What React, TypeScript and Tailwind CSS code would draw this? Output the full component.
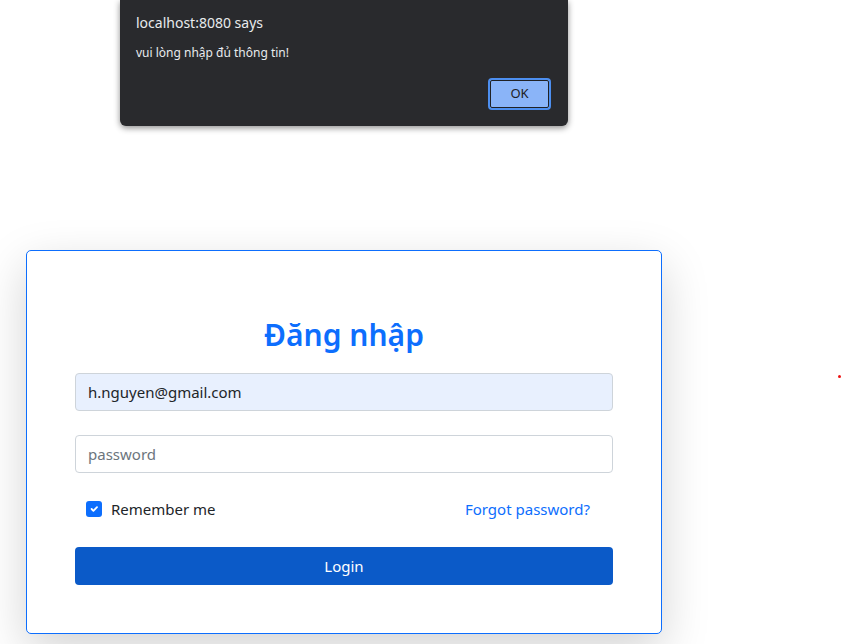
import React from "react";

export default function App() {
  return (
    <div className="relative w-[843px] h-[644px] overflow-hidden bg-white" style={{ fontFamily: '"Noto Sans", "Open Sans", sans-serif' }}>
      {/* login card */}
      <div className="pt-[250px] pl-[26px]">
        <div className="w-[636px] h-[384px] border border-[#0d6efd] rounded-[5px] bg-white shadow-[0_16px_48px_rgba(0,0,0,0.175)] px-[48px] pt-[64px]">
          <h1 className="text-center text-[30px] leading-[40px] font-semibold text-[#0d6efd] mb-[18px]">Đăng nhập</h1>
          <div className="h-[38px] rounded-[4px] border border-[#ced4da] bg-[#e8f0fe] px-[12px] flex items-center text-[15px] text-[#212529]">h.nguyen@gmail.com</div>
          <div className="mt-[24px] h-[38px] rounded-[4px] border border-[#ced4da] bg-white px-[12px] flex items-center text-[15px] text-[#6c757d]">password</div>
          <div className="mt-[24px] h-[24px] flex items-center justify-between pl-[11px] pr-[23px]">
            <div className="flex items-center gap-[9px]">
              <div className="w-[16px] h-[16px] rounded-[3px] bg-[#0d6efd] flex items-center justify-center">
                <svg width="12" height="12" viewBox="0 0 20 20" fill="none">
                  <path d="M6 10l3 3 6-6" stroke="#fff" strokeWidth="3" strokeLinecap="round" strokeLinejoin="round" />
                </svg>
              </div>
              <span className="text-[15px] text-[#212529]">Remember me</span>
            </div>
            <span className="text-[15px] text-[#0d6efd]">Forgot password?</span>
          </div>
          <div className="mt-[26px] h-[38px] rounded-[4px] bg-[#0b5ac8] flex items-center justify-center text-[15px] text-white">Login</div>
        </div>
      </div>

      {/* red dot */}
      <div className="absolute left-[838px] top-[375px] w-[3px] h-[3px] bg-[#ee1111] rounded-full" />

      {/* alert dialog */}
      <div className="absolute left-[120px] top-0 w-[448px] h-[126px] bg-[#292a2d] rounded-b-[6px] shadow-[0_2px_6px_rgba(0,0,0,0.45)] flex flex-col pl-[16px] pr-[17px] pt-[13px]">
        <div className="text-[14px] leading-[20px] text-[#e8eaed]">localhost:8080 says</div>
        <div className="mt-[11px] text-[12px] leading-[18px] text-[#e8eaed]">vui lòng nhập đủ thông tin!</div>
        <div className="mt-[16px] flex justify-end">
          <div className="relative w-[63px] h-[32px] rounded-[4px] border-2 border-[#4d8ff0] bg-[#8ab4f8] flex items-center justify-center">
            <div className="absolute inset-0 rounded-[2px] border border-[#202124]" />
            <span className="text-[13px] text-[#202124]">OK</span>
          </div>
        </div>
      </div>
    </div>
  );
}
